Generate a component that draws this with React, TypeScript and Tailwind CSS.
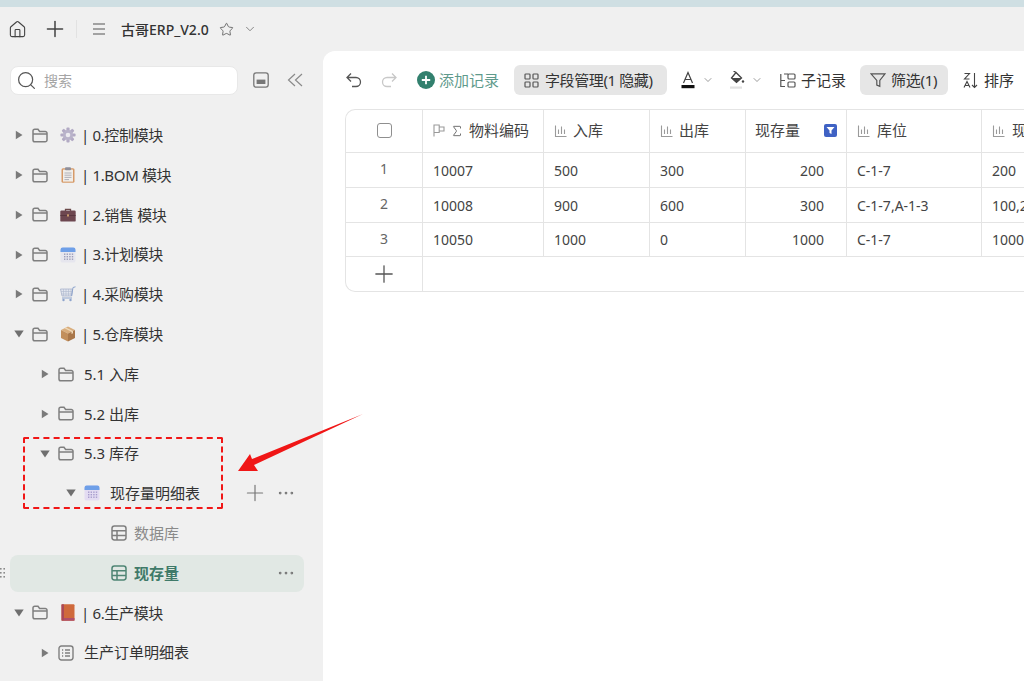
import React from "react";
import { House, Plus, Star, ChevronDown, Search, Sigma, Ellipsis } from "lucide-react";

const Right = () => (
  <svg width="8" height="10" viewBox="0 0 8 10"><path d="M0.8 0.8 L7.5 5 L0.8 9.2 Z" fill="#7a7a7a" /></svg>
);
const Down = () => (
  <svg width="10" height="8" viewBox="0 0 10 8"><path d="M0.3 0.6 H9.7 L5 7.6 Z" fill="#6f6f6f" /></svg>
);
const Folder = () => (
  <svg width="16" height="15" viewBox="0 0 16 15" fill="none" stroke="#7f7f7f" strokeWidth="1.5">
    <path d="M1 3 a1.8 1.8 0 0 1 1.8 -1.8 H6 L7.6 3.4 H13.2 a1.8 1.8 0 0 1 1.8 1.8 V12 a1.8 1.8 0 0 1 -1.8 1.8 H2.8 A1.8 1.8 0 0 1 1 12 Z" />
    <path d="M1 6 H15" />
  </svg>
);
const TableIcon = ({ c = "#7f7f7f" }: { c?: string }) => (
  <svg width="16" height="16" viewBox="0 0 16 16" fill="none" stroke={c} strokeWidth="1.5">
    <rect x="1" y="1" width="14" height="14" rx="2.4" />
    <path d="M1 5.8 H15 M1 10.4 H15 M6 5.8 V15" />
  </svg>
);
const ListIcon = () => (
  <svg width="16" height="16" viewBox="0 0 16 16" fill="none" stroke="#7f7f7f" strokeWidth="1.4">
    <rect x="1" y="1" width="14" height="14" rx="2.4" />
    <path d="M4 5 H5.2 M4 8 H5.2 M4 11 H5.2 M7 5 H12 M7 8 H12 M7 11 H12" />
  </svg>
);
const Gear = () => (
  <svg width="16" height="16" viewBox="0 0 16 16">
    <g fill="#b2aac4">
      {[0, 45, 90, 135, 180, 225, 270, 315].map((a) => (
        <rect key={a} x="6.4" y="0.4" width="3.2" height="4" rx="1" transform={`rotate(${a} 8 8)`} />
      ))}
    </g>
    <circle cx="8" cy="8" r="5" fill="#b9b3ca" />
    <circle cx="8" cy="8" r="2.3" fill="#ecebf0" />
  </svg>
);
const Clip = () => (
  <svg width="14" height="16" viewBox="0 0 14 16">
    <rect x="0.5" y="1.2" width="13" height="14.5" rx="1.5" fill="#d69a68" />
    <rect x="2" y="2.6" width="10" height="12" fill="#f1eeea" />
    <rect x="4" y="0.3" width="6" height="3" rx="1" fill="#8f8f9a" />
    <path d="M3.5 6 H10.5 M3.5 8.2 H10.5 M3.5 10.4 H10.5 M3.5 12.6 H8" stroke="#a9a9b3" strokeWidth="0.9" />
  </svg>
);
const Case = () => (
  <svg width="16" height="14" viewBox="0 0 16 14">
    <path d="M5.5 3 V1.4 H10.5 V3" fill="none" stroke="#6b4a4a" strokeWidth="1.3" />
    <rect x="0.3" y="2.6" width="15.4" height="11" rx="1.2" fill="#6d4750" />
    <rect x="0.3" y="7" width="15.4" height="0.8" fill="#54343c" />
    <rect x="7" y="6.3" width="2" height="2.2" fill="#c99a6b" />
  </svg>
);
const Cal = ({ lilac = false }: { lilac?: boolean }) => (
  <svg width="16" height="16" viewBox="0 0 16 16">
    <rect x="0.5" y="0.6" width="15" height="15" rx="2.2" fill={lilac ? "#e3dcf2" : "#e6e6ee"} />
    <path d="M0.5 5 V2.8 A2.2 2.2 0 0 1 2.7 0.6 H13.3 A2.2 2.2 0 0 1 15.5 2.8 V5 Z" fill="#6e9fe8" />
    <g fill={lilac ? "#a79ccc" : "#9a9cb8"}>
      {[6.5, 9, 11.5].map((y) =>
        [4, 6.6, 9.2, 11.8].map((x) => <rect key={`${x}-${y}`} x={x} y={y} width="1.4" height="1.4" />)
      )}
    </g>
  </svg>
);
const Cart = () => (
  <svg width="16" height="16" viewBox="0 0 16 16" fill="none">
    <path d="M0.5 3 H12.5 L11.6 10 H2 Z" fill="#e2e5ee" stroke="#a9b4cc" strokeWidth="0.8" />
    <path d="M3.5 3 V10 M6 3 V10 M8.5 3 V10 M11 3 V10 M1 5.5 H12.3 M1.5 8 H12" stroke="#aeb8cf" strokeWidth="0.6" />
    <path d="M11.6 10 L13 1.5 L15.5 0.8 M2 12 H12" stroke="#8ea4cc" strokeWidth="1" />
    <circle cx="3.5" cy="14" r="1.2" fill="#8ea4cc" />
    <circle cx="10.5" cy="14" r="1.2" fill="#8ea4cc" />
  </svg>
);
const Box = () => (
  <svg width="16" height="16" viewBox="0 0 16 16">
    <path d="M8 0.5 L15 4 L8 7.6 L1 4 Z" fill="#d9ad7c" />
    <path d="M1 4 L8 7.6 V15.5 L1 12 Z" fill="#c28f5c" />
    <path d="M15 4 L8 7.6 V15.5 L15 12 Z" fill="#a9774a" />
    <path d="M4.5 2.2 L11.5 5.8 V8 L13 7.2 V5 L6 1.4 Z" fill="#efd9b8" />
  </svg>
);
const Book = () => (
  <svg width="14" height="17" viewBox="0 0 14 17">
    <rect x="0.5" y="0.3" width="13" height="16.4" rx="1" fill="#cf6a3c" />
    <rect x="0.5" y="0.3" width="2.4" height="16.4" fill="#a9485a" />
    <rect x="2.9" y="14" width="10.6" height="2.7" fill="#b04f6a" />
  </svg>
);
const Bars = () => (
  <svg width="14" height="14" viewBox="0 0 14 14" fill="none" stroke="#9a9a9a" strokeWidth="1.1" className="shrink-0">
    <path d="M1.5 1.5 V12.5 H12.5 M4.5 5.5 V10 M7.5 2.5 V10 M10.5 5.5 V10" />
  </svg>
);

type RowProps = {
  pad: string;
  arrow?: "r" | "d";
  icon: React.ReactNode;
  emoji?: React.ReactNode;
  label: string;
  labelClass?: string;
  gap?: string;
  right?: React.ReactNode;
  sel?: boolean;
};

const Row = ({ pad, arrow, icon, emoji, label, labelClass = "text-[#333333]", gap = "ml-[10px]", right, sel }: RowProps) => (
  <div className={`relative flex h-[37px] w-[294px] mt-[2.8px] items-center rounded-lg ${pad} ${sel ? "bg-[#e1e8e4]" : ""}`}>
    {arrow && (
      <span className="flex w-[10px] justify-center">{arrow === "r" ? <Right /> : <Down />}</span>
    )}
    <span className={`flex items-center ${arrow ? "ml-[8px]" : ""}`}>{icon}</span>
    {emoji && <span className="ml-[12px] flex w-[16px] justify-center">{emoji}</span>}
    <span className={`${emoji ? "ml-[5px] tracking-[-0.35px]" : gap} whitespace-nowrap text-[15px] ${labelClass}`}>{label}</span>
    {right}
  </div>
);

const Th = ({ children, cls = "pl-[10px]" }: { children: React.ReactNode; cls?: string }) => (
  <div className={`flex items-center whitespace-nowrap border-r border-[#e4e4e4] pb-[1px] text-[15px] text-[#444444] ${cls}`}>{children}</div>
);
const Td = ({ children, cls = "pl-[10px]" }: { children?: React.ReactNode; cls?: string }) => (
  <div className={`flex items-center whitespace-nowrap border-r border-[#e4e4e4] text-[14px] text-[#444444] ${cls}`}>{children}</div>
);

const cols = "grid grid-cols-[77px_121px_106px_96px_101px_135px_1fr]";

const rows = [
  ["1", "10007", "500", "300", "200", "C-1-7", "200"],
  ["2", "10008", "900", "600", "300", "C-1-7,A-1-3", "100,200"],
  ["3", "10050", "1000", "0", "1000", "C-1-7", "1000"],
];

export default function App() {
  return (
    <div
      className="relative flex h-[681px] w-[1024px] flex-col overflow-hidden bg-[#f0f0f0]"
      style={{ fontFamily: '"Noto Sans", "Noto Sans CJK SC", sans-serif' }}
    >
      <div className="h-[7px] shrink-0 bg-[#cfdfe3]" />
      <header className="flex h-[44px] shrink-0 items-center text-[#444444]">
        <House size={19} strokeWidth={1.4} className="ml-[8px]" />
        <Plus size={26} strokeWidth={1.4} className="ml-[15px]" />
        <div className="ml-[8px] h-[18px] w-px bg-[#e2e2e2]" />
        <svg width="14" height="14" viewBox="0 0 14 14" stroke="#555555" strokeWidth="1.2" className="ml-[15px]">
          <path d="M1 2 H13 M1 7 H13 M1 12 H13" />
        </svg>
        <span className="ml-[15px] whitespace-nowrap text-[14px] font-medium text-[#333333]">古哥ERP_V2.0</span>
        <Star size={15} strokeWidth={1.3} className="ml-[10px] text-[#555555]" />
        <ChevronDown size={14} strokeWidth={1.3} className="ml-[9px] text-[#666666]" />
      </header>

      <div className="flex min-h-0 flex-1">
        <aside className="w-[323px] shrink-0 pl-[10px]">
          <div className="mt-[14px] flex h-[30px] items-center">
            <div className="flex h-[29px] w-[228px] items-center rounded-lg border border-[#e8e8e8] bg-white pl-[5px]">
              <Search size={21} strokeWidth={1.4} className="text-[#555555]" />
              <span className="ml-[7px] text-[14px] text-[#a5a5a5]">搜索</span>
            </div>
            <svg width="16" height="16" viewBox="0 0 16 16" fill="none" className="ml-[15px]">
              <rect x="0.8" y="0.8" width="14.4" height="14.4" rx="2.4" stroke="#777777" strokeWidth="1.3" />
              <rect x="3.6" y="7.6" width="8.8" height="4.4" fill="#777777" />
            </svg>
            <svg width="16" height="14" viewBox="0 0 16 14" fill="none" stroke="#8a8a8a" strokeWidth="1.2" className="ml-[18px]">
              <path d="M8 1 L1.5 7 L8 13 M15 1 L8.5 7 L15 13" />
            </svg>
          </div>

          <div className="mt-[21.8px]">
            <Row pad="pl-[4px]" arrow="r" icon={<Folder />} emoji={<Gear />} label="| 0.控制模块" />
            <Row pad="pl-[4px]" arrow="r" icon={<Folder />} emoji={<Clip />} label="| 1.BOM 模块" />
            <Row pad="pl-[4px]" arrow="r" icon={<Folder />} emoji={<Case />} label="| 2.销售 模块" />
            <Row pad="pl-[4px]" arrow="r" icon={<Folder />} emoji={<Cal />} label="| 3.计划模块" />
            <Row pad="pl-[4px]" arrow="r" icon={<Folder />} emoji={<Cart />} label="| 4.采购模块" />
            <Row pad="pl-[4px]" arrow="d" icon={<Folder />} emoji={<Box />} label="| 5.仓库模块" />
            <Row pad="pl-[30px]" arrow="r" icon={<Folder />} label="5.1 入库" />
            <Row pad="pl-[30px]" arrow="r" icon={<Folder />} label="5.2 出库" />
            <Row pad="pl-[30px]" arrow="d" icon={<Folder />} label="5.3 库存" />
            <Row
              pad="pl-[56px]"
              arrow="d"
              icon={<Cal lilac />}
              label="现存量明细表"
              right={
                <div className="absolute right-[8px] top-0 flex h-full items-center gap-[8px] text-[#777777]">
                  <Plus size={26} strokeWidth={1.1} />
                  <Ellipsis size={20} strokeWidth={1.3} />
                </div>
              }
            />
            <Row pad="pl-[101px]" icon={<TableIcon />} label="数据库" labelClass="text-[#8a8a8a]" gap="ml-[7px]" />
            <Row
              sel
              pad="pl-[101px]"
              icon={<TableIcon c="#4f8574" />}
              label="现存量"
              labelClass="text-[#3f7a69] font-bold"
              gap="ml-[7px]"
              right={
                <>
                  <svg width="6" height="10" viewBox="0 0 6 10" fill="#8a8a8a" className="absolute -left-[10px] top-[13px]">
                    <rect x="0" y="0" width="1.6" height="1.6" /><rect x="3.4" y="0" width="1.6" height="1.6" />
                    <rect x="0" y="4" width="1.6" height="1.6" /><rect x="3.4" y="4" width="1.6" height="1.6" />
                    <rect x="0" y="8" width="1.6" height="1.6" /><rect x="3.4" y="8" width="1.6" height="1.6" />
                  </svg>
                  <Ellipsis size={20} strokeWidth={1.3} className="absolute right-[8px] top-[8px] text-[#777777]" />
                </>
              }
            />
            <Row pad="pl-[4px]" arrow="d" icon={<Folder />} emoji={<Book />} label="| 6.生产模块" />
            <Row pad="pl-[30px]" arrow="r" icon={<ListIcon />} label="生产订单明细表" />
          </div>
        </aside>

        <main className="min-w-0 flex-1 overflow-hidden rounded-tl-[12px] bg-white pl-[22px] pt-[14px]">
          <div className="flex h-[30px] items-center whitespace-nowrap text-[15px] text-[#333333]">
            <svg width="18" height="18" viewBox="0 0 18 18" fill="none" stroke="#555555" strokeWidth="1.3">
              <path d="M6 2.5 L2 6.5 L6 10.5 M2 6.5 H11 a4.5 4.5 0 0 1 0 9 H7" />
            </svg>
            <svg width="18" height="18" viewBox="0 0 18 18" fill="none" stroke="#c8c8c8" strokeWidth="1.3" className="ml-[17px]">
              <path d="M12 2.5 L16 6.5 L12 10.5 M16 6.5 H7 a4.5 4.5 0 0 0 0 9 H11" />
            </svg>
            <svg width="18" height="18" viewBox="0 0 18 18" className="ml-[19px]">
              <circle cx="9" cy="9" r="9" fill="#32806e" />
              <path d="M9 4.8 V13.2 M4.8 9 H13.2" stroke="#ffffff" strokeWidth="1.8" />
            </svg>
            <span className="ml-[4px] text-[#5f9a8c]">添加记录</span>
            <div className="ml-[15px] flex h-[30px] w-[153px] items-center rounded-md bg-[#e6e6e6] pl-[10px]">
              <svg width="15" height="15" viewBox="0 0 15 15" fill="none" stroke="#555555" strokeWidth="1.2">
                <rect x="1" y="1" width="5" height="5" rx="0.8" /><rect x="9" y="1" width="5" height="5" rx="0.8" />
                <rect x="1" y="9" width="5" height="5" rx="0.8" /><rect x="9" y="9" width="5" height="5" rx="0.8" />
              </svg>
              <span className="ml-[6px] tracking-[-0.4px]">字段管理(1 隐藏)</span>
            </div>
            <svg width="14" height="18" viewBox="0 0 14 18" fill="none" className="ml-[14px]">
              <path d="M2.5 12 L7 1.5 L11.5 12 M4 8.5 H10" stroke="#444444" strokeWidth="1.2" />
              <rect x="0.5" y="14" width="13" height="3.2" fill="#111111" />
            </svg>
            <ChevronDown size={12} strokeWidth={1.3} className="ml-[7px] text-[#666666]" />
            <svg width="16" height="19" viewBox="0 0 16 19" fill="none" className="ml-[15px]">
              <path d="M7 1.5 L12.5 7 L7.5 11.5 L2.5 7 Z" stroke="#444444" strokeWidth="1.3" />
              <path d="M2.5 7 H12.5 L7.5 11.5 Z" fill="#444444" />
              <path d="M7 1.5 L4.5 0" stroke="#444444" strokeWidth="1.2" />
              <circle cx="14" cy="10.5" r="1.2" fill="#444444" />
              <rect x="1" y="15.5" width="12" height="2.2" fill="#e2e2e2" />
            </svg>
            <ChevronDown size={12} strokeWidth={1.3} className="ml-[6px] text-[#666666]" />
            <svg width="16" height="15" viewBox="0 0 16 15" fill="none" stroke="#555555" strokeWidth="1.2" className="ml-[17px]">
              <path d="M0.8 1 V13.5 H5 M0.8 7.5 H5" />
              <rect x="8" y="1" width="7" height="5" rx="1" /><rect x="8" y="9" width="7" height="5" rx="1" />
              <path d="M4 1 H8" />
            </svg>
            <span className="ml-[5px]">子记录</span>
            <div className="ml-[14px] flex h-[30px] w-[88px] items-center rounded-md bg-[#e6e6e6] pl-[10px]">
              <svg width="16" height="16" viewBox="0 0 16 16" fill="none" stroke="#555555" strokeWidth="1.2">
                <path d="M1 1.8 H15 L9.8 8.4 V14.4 L6.8 13 V8.4 Z" />
              </svg>
              <span className="ml-[5px] tracking-[-0.3px]">筛选(1)</span>
            </div>
            <svg width="15" height="17" viewBox="0 0 15 17" fill="none" stroke="#444444" strokeWidth="1.1" className="ml-[15px]">
              <path d="M1.5 1.5 H6.5 L1.5 7 H6.5 M1 15.5 L4 9.5 L7 15.5 M2 13.5 H6 M11.5 1 V15.5 M9 13 L11.5 15.5 L14 13" />
            </svg>
            <span className="ml-[6px]">排序</span>
          </div>

          <div className="mt-[14px] w-[720px] overflow-hidden rounded-l-[10px] border border-r-0 border-[#e4e4e4]">
            <div className={`${cols} h-[43px] border-b border-[#e4e4e4]`}>
              <Th cls="justify-center">
                <span className="h-[15px] w-[15px] rounded-[3px] border border-[#8f8f8f]" />
              </Th>
              <Th>
                <svg width="12" height="13" viewBox="0 0 12 13" fill="none" stroke="#9a9a9a" strokeWidth="1.1">
                  <path d="M1 12.5 V1 H6.2 V8.5 H1 M6.2 3 H11 V7 H6.2" />
                </svg>
                <Sigma size={14} strokeWidth={1.6} className="ml-[5px] text-[#666666]" />
                <span className="ml-[5px]">物料编码</span>
              </Th>
              <Th><Bars /><span className="ml-[5px]">入库</span></Th>
              <Th><Bars /><span className="ml-[5px]">出库</span></Th>
              <Th cls="relative pl-[9px]">
                <span>现存量</span>
                <span className="absolute right-[9px] top-[14px] flex h-[13px] w-[13px] items-center justify-center rounded-[2px] bg-[#3f62c4]">
                  <svg width="9" height="9" viewBox="0 0 9 9"><path d="M0.5 1 H8.5 L5.5 4.6 V8 L3.5 7 V4.6 Z" fill="#ffffff" /></svg>
                </span>
              </Th>
              <Th><Bars /><span className="ml-[6px]">库位</span></Th>
              <Th cls="border-r-0 pl-[10px]"><Bars /><span className="ml-[6px]">现存量明细</span></Th>
            </div>
            {rows.map((r, i) => (
              <div key={r[0]} className={`${cols} ${i === 2 ? "h-[34px]" : "h-[35px]"} border-b border-[#e4e4e4]`}>
                <Td cls="justify-center pb-[3px] text-[#666666]">{r[0]}</Td>
                <Td>{r[1]}</Td>
                <Td>{r[2]}</Td>
                <Td>{r[3]}</Td>
                <Td cls="justify-end pr-[22px]">{r[4]}</Td>
                <Td>{r[5]}</Td>
                <Td cls="border-r-0 pl-[10px]">{r[6]}</Td>
              </div>
            ))}
            <div className="flex h-[34px]">
              <div className="flex w-[77px] items-center justify-center border-r border-[#e4e4e4]">
                <Plus size={28} strokeWidth={1.1} className="text-[#555555]" />
              </div>
            </div>
          </div>
        </main>
      </div>

      {/* annotation overlays */}
      <div className="absolute left-[23px] top-[437px] h-[72px] w-[200px] rounded-[2px] border-2 border-dashed border-[#f01616]" />
      <svg width="135" height="70" viewBox="0 0 135 70" className="absolute left-[235px] top-[410px]">
        <path d="M3 61 L15 44 L17 49 L128 4 L19 55 L23 61 Z" fill="#f01616" />
      </svg>
    </div>
  );
}
